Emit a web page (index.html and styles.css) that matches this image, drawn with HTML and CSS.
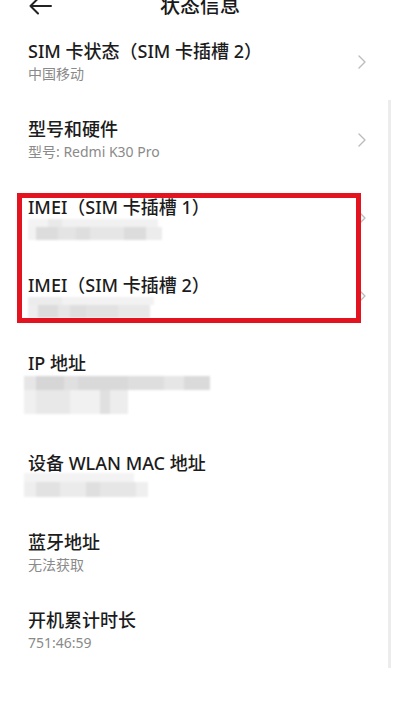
FILE: index.html
```html
<!DOCTYPE html>
<html lang="zh-CN">
<head>
<meta charset="utf-8">
<title>状态信息</title>
<link rel="stylesheet" href="styles.css">
</head>
<body>
<div class="screen">
  <header class="topbar">
    <svg class="back" width="24" height="24" viewBox="0 0 24 24"><path d="M2.5 12H23M10 4.5L2.5 12L10 19.5"/></svg>
    <h1 class="title">状态信息</h1>
    <span class="spacer"></span>
  </header>
  <ul class="list">
    <li class="row">
      <div class="text"><div class="label">SIM 卡状态（SIM 卡插槽 2）</div><div class="sub">中国移动</div></div>
      <svg class="chev" width="8" height="14" viewBox="0 0 8 14"><path d="M1 1L7 7L1 13"/></svg>
    </li>
    <li class="row">
      <div class="text"><div class="label">型号和硬件</div><div class="sub">型号: Redmi K30 Pro</div></div>
      <svg class="chev" width="8" height="14" viewBox="0 0 8 14"><path d="M1 1L7 7L1 13"/></svg>
    </li>
    <li class="row">
      <div class="text"><div class="label">IMEI（SIM 卡插槽 1）</div><div class="mosaic mosaic-imei1"></div></div>
      <svg class="chev" width="8" height="14" viewBox="0 0 8 14"><path d="M1 1L7 7L1 13"/></svg>
    </li>
    <li class="row">
      <div class="text"><div class="label">IMEI（SIM 卡插槽 2）</div><div class="mosaic mosaic-imei2"></div></div>
      <svg class="chev" width="8" height="14" viewBox="0 0 8 14"><path d="M1 1L7 7L1 13"/></svg>
    </li>
    <li class="row">
      <div class="text"><div class="label">IP 地址</div><div class="mosaic mosaic-ip"></div></div>
    </li>
    <li class="row">
      <div class="text"><div class="label">设备 WLAN MAC 地址</div><div class="mosaic mosaic-mac"></div></div>
    </li>
    <li class="row">
      <div class="text"><div class="label">蓝牙地址</div><div class="sub">无法获取</div></div>
    </li>
    <li class="row">
      <div class="text"><div class="label">开机累计时长</div><div class="sub">751:46:59</div></div>
    </li>
  </ul>
  <div class="scrollbar"></div>
  <div class="highlight"></div>
</div>
</body>
</html>
```

FILE: styles.css
```css
* { box-sizing: border-box; }
html, body { margin: 0; padding: 0; background: #fff; }
body {
  font-family: "Noto Sans", "Noto Sans CJK SC", sans-serif;
  color: #1c1c1c;
  overflow: hidden;
}
.screen {
  position: relative;
  width: 400px;
  height: 718px;
  overflow: hidden;
  background: #fff;
}
.topbar {
  display: flex;
  align-items: flex-start;
  height: 22px;
  padding: 0 28px;
}
.back {
  margin-top: -6px;
  flex: none;
  fill: none;
  stroke: #222;
  stroke-width: 2;
  stroke-linecap: round;
  stroke-linejoin: round;
}
.title {
  flex: 1;
  margin: -5px 0 0;
  font-family: "Noto Sans CJK SC", sans-serif;
  font-size: 20px;
  line-height: 20px;
  font-weight: 500;
  text-align: center;
  color: #1a1a1a;
}
.spacer { width: 24px; flex: none; }
.list { list-style: none; margin: 0; padding: 0; }
.row {
  display: flex;
  align-items: center;
  padding: 17px 34px 16px 28px;
}
.text { flex: 1; min-width: 0; }
.label {
  font-size: 18px;
  line-height: 24px;
  font-weight: 500;
  color: #1c1c1c;
  white-space: nowrap;
}
.sub {
  font-size: 14px;
  line-height: 21px;
  color: #8a8a8a;
}
.chev {
  flex: none;
  fill: none;
  stroke: #bcbcbc;
  stroke-width: 1.4;
  stroke-linecap: round;
  stroke-linejoin: round;
}
.mosaic {
  height: 21px;
  filter: blur(1.2px);
  background-repeat: no-repeat;
}
.mosaic-imei1 {
  width: 138px;
  background-image:
    linear-gradient(to right, #f2f2f2 0 8px, #dcdcdc 8px 30px, #e4e4e4 30px 48px, #dedede 48px 62px, #e6e6e6 62px 96px, #dcdcdc 96px 118px, #ececec 118px 134px, transparent 134px),
    linear-gradient(to right, #f3f3f3 0 20px, #e9e9e9 20px 34px, #f1f1f1 34px 130px, transparent 130px);
  background-size: 100% 13px, 100% 8px;
  background-position: 0 8px, 0 0;
}
.mosaic-imei2 {
  width: 128px;
  background-image:
    linear-gradient(to right, #eeeeee 0 10px, #dcdcdc 10px 30px, #e6e6e6 30px 42px, #dedede 42px 58px, #e2e2e2 58px 90px, #e8e8e8 90px 122px, transparent 122px),
    linear-gradient(to right, #ececec 0 34px, #f2f2f2 34px 126px, transparent 126px);
  background-size: 100% 13px, 100% 8px;
  background-position: 0 8px, 0 0;
}
.mosaic-ip {
  width: 192px;
  height: 42px;
  margin-left: -4px;
  margin-top: 1px;
  background-image:
    linear-gradient(to right, #e6e6e6 0 12px, #d6d6d6 12px 40px, #e0e0e0 40px 54px, #d9d9d9 54px 104px, #dedede 104px 140px, #e6e6e6 140px 160px, #dadada 160px 186px, transparent 186px),
    linear-gradient(to right, #f0f0f0 0 12px, #e8e8e8 12px 46px, #f1f1f1 46px 76px, #e0e0e0 76px 86px, #ededed 86px 104px, transparent 104px);
  background-size: 100% 14px, 100% 24px;
  background-position: 0 0, 0 14px;
}
.mosaic-mac {
  width: 128px;
  height: 24px;
  margin-left: -4px;
  margin-top: -2px;
  background-image:
    linear-gradient(to right, #eeeeee 0 12px, #e2e2e2 12px 36px, #ebebeb 36px 62px, #dfdfdf 62px 76px, #e6e6e6 76px 112px, #efefef 112px 124px, transparent 124px),
    linear-gradient(to right, #f3f3f3 0 110px, transparent 110px);
  background-size: 100% 15px, 100% 9px;
  background-position: 0 9px, 0 0;
}
.scrollbar {
  position: absolute;
  left: 388px;
  top: 100px;
  width: 3px;
  height: 568px;
  background: #ececec;
}
.highlight {
  position: absolute;
  left: 17px;
  top: 193px;
  width: 344px;
  height: 130px;
  border: 5px solid #e3141f;
}
```
